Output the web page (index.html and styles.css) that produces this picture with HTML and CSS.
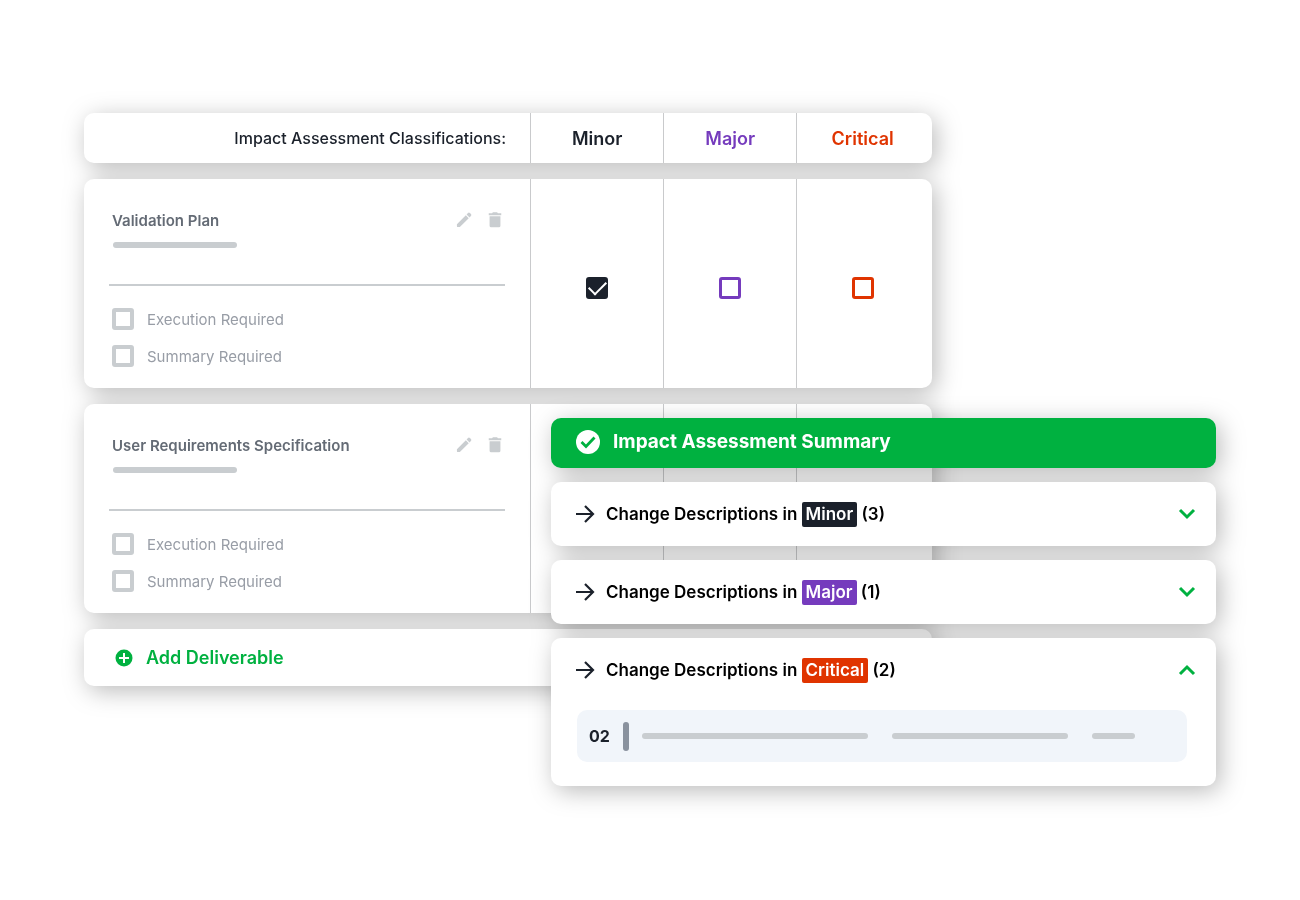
FILE: index.html
```
<!doctype html>
<html lang="en">
  <head>
    <meta charset="UTF-8" />
    <meta name="viewport" content="width=device-width, initial-scale=1.0" />
    <title>Impact Assessment</title>
    <link rel="stylesheet" href="styles.css">
  </head>
  <body>
    <!-- Shared icons -->
    <svg class="sprite" aria-hidden="true">
      <symbol id="pencil" viewBox="0 0 24 24">
        <path d="M3.5 17 14.2 6.3l3.5 3.5L7 20.5H4.6a1.1 1.1 0 0 1-1.1-1.1zM20.3 7.2l-1.7 1.7-3.5-3.5 1.7-1.7a1.6 1.6 0 0 1 2.3 0l1.2 1.2a1.6 1.6 0 0 1 0 2.3z" />
      </symbol>
      <symbol id="trash" viewBox="0 0 24 24">
        <path d="M5.5 7.5h13V19a1.8 1.8 0 0 1-1.8 1.8H7.3A1.8 1.8 0 0 1 5.5 19zM4.500 4h4l1-1.200h5l1 1.200h4v2.200h-15z" />
      </symbol>
      <symbol id="arrow" viewBox="0 0 20 20">
        <path d="M1 10h17M10 2l8 8-8 8" />
      </symbol>
      <symbol id="chevron" viewBox="0 0 18 12">
        <path d="M2 2l7 7 7-7" />
      </symbol>
    </svg>

    <main class="scene">
      <table class="board">
        <colgroup>
          <col class="col-name" />
          <col class="col-level" />
          <col class="col-level" />
          <col />
        </colgroup>
        <thead>
          <tr>
            <th class="board-title" scope="col">Impact Assessment Classifications:</th>
            <th class="level minor" scope="col">Minor</th>
            <th class="level major" scope="col">Major</th>
            <th class="level critical" scope="col">Critical</th>
          </tr>
        </thead>
        <tbody>
          <tr>
            <td class="deliverable">
              <div class="deliverable-head">
                <h2>Validation Plan</h2>
                <button class="icon-btn" aria-label="Edit"><svg><use href="#pencil" /></svg></button>
                <button class="icon-btn" aria-label="Delete"><svg><use href="#trash" /></svg></button>
              </div>
              <div class="name-line"></div>
              <hr />
              <label class="option"><input type="checkbox" class="check" /> Execution Required</label>
              <label class="option"><input type="checkbox" class="check" /> Summary Required</label>
            </td>
            <td class="level minor"><input type="checkbox" class="check" aria-label="Minor" checked /></td>
            <td class="level major"><input type="checkbox" class="check" aria-label="Major" /></td>
            <td class="level critical"><input type="checkbox" class="check" aria-label="Critical" /></td>
          </tr>
          <tr>
            <td class="deliverable">
              <div class="deliverable-head">
                <h2>User Requirements Specification</h2>
                <button class="icon-btn" aria-label="Edit"><svg><use href="#pencil" /></svg></button>
                <button class="icon-btn" aria-label="Delete"><svg><use href="#trash" /></svg></button>
              </div>
              <div class="name-line"></div>
              <hr />
              <label class="option"><input type="checkbox" class="check" /> Execution Required</label>
              <label class="option"><input type="checkbox" class="check" /> Summary Required</label>
            </td>
            <td class="level"></td>
            <td class="level"></td>
            <td class="level"></td>
          </tr>
        </tbody>
        <tfoot>
          <tr>
            <td class="board-footer" colspan="4">
              <button class="add-btn">
                <svg viewBox="0 0 18 18">
                  <circle cx="9" cy="9" r="8.5" />
                  <path d="M9 4v10M4 9h10" />
                </svg>
                Add Deliverable
              </button>
            </td>
          </tr>
        </tfoot>
      </table>

      <section class="summary">
        <h1 class="summary-title">
          <svg viewBox="0 0 24 24">
            <circle cx="12" cy="12" r="12" />
            <path d="M5.5 12l4.5 4.500 8.500-9" />
          </svg>
          Impact Assessment Summary
        </h1>

        <div class="panel">
          <button class="panel-head" aria-expanded="false">
            <svg class="arrow"><use href="#arrow" /></svg>
            <span class="panel-text">Change Descriptions in <span class="tag tag-minor">Minor</span> (3)</span>
            <svg class="chevron"><use href="#chevron" /></svg>
          </button>
        </div>

        <div class="panel">
          <button class="panel-head" aria-expanded="false">
            <svg class="arrow"><use href="#arrow" /></svg>
            <span class="panel-text">Change Descriptions in <span class="tag tag-major">Major</span> (1)</span>
            <svg class="chevron"><use href="#chevron" /></svg>
          </button>
        </div>

        <div class="panel">
          <button class="panel-head" aria-expanded="true">
            <svg class="arrow"><use href="#arrow" /></svg>
            <span class="panel-text">Change Descriptions in <span class="tag tag-critical">Critical</span> (2)</span>
            <svg class="chevron"><use href="#chevron" /></svg>
          </button>
          <div class="change">
            <span class="change-number">02</span>
            <span class="change-bar"></span>
            <div class="change-lines">
              <span></span>
              <span></span>
              <span></span>
            </div>
          </div>
        </div>
      </section>
    </main>
  </body>
</html>
```
FILE: styles.css
```
:root {
  --green: #00b140;
  --ink: #1b212b;
  --purple: #753bbd;
  --red: #e03400;
  --grey: #c9cdd0;
  --divider: #c9cacc;
  --title: #646b75;
  --label: #989da6;
  --radius: 10px;
}

* {
  box-sizing: border-box;
}

body {
  margin: 0;
  background: #fff;
  color: var(--ink);
  font-family: Inter, 'Liberation Sans', sans-serif;
  font-size: 15px;
}

h1,
h2 {
  margin: 0;
}

button {
  padding: 0;
  border: none;
  background: none;
  color: inherit;
  font: inherit;
  cursor: pointer;
}

.sprite {
  display: none;
}

/* The board and the summary share the middle column */
.scene {
  display: grid;
  grid-template-columns: 467fr 381fr 284fr;
  align-items: start;
  min-height: 100vh;
  padding: 97px 84px 48px;
}

.board,
.summary {
  grid-row: 1;
  filter: drop-shadow(4px 5px 12px rgba(0, 0, 0, 0.27));
}

/* Board */
.board {
  grid-column: 1 / 3;
  width: 100%;
  table-layout: fixed;
  border-spacing: 0 16px;
}

.col-name {
  width: 52.6%;
}

.col-level {
  width: 15.7%;
}

.board th,
.board td {
  padding: 0;
  background: #fff;
}

.board tr > :first-child {
  border-radius: var(--radius) 0 0 var(--radius);
}

.board tr > :last-child {
  border-radius: 0 var(--radius) var(--radius) 0;
}

.board .board-title {
  height: 50px;
  padding-right: 24px;
  font-size: 16px;
  font-weight: 500;
  text-align: right;
}

.board .level {
  border-left: 1px solid var(--divider);
  text-align: center;
  vertical-align: middle;
  font-size: 18px;
  font-weight: 600;
}

.board td.level {
  padding-top: 8px;
}

.level.minor {
  color: var(--ink);
}

.level.major {
  color: var(--purple);
}

.board .level.critical {
  padding-right: 4px;
  color: var(--red);
}

.board .deliverable {
  padding: 29px 25px 21px;
}

.deliverable-head {
  display: flex;
  align-items: center;
  height: 24px;
  padding-left: 3px;
}

.deliverable-head h2 {
  flex: 1;
  color: var(--title);
  font-size: 15px;
  font-weight: 600;
}

.icon-btn {
  display: flex;
  margin-left: 11px;
  color: var(--grey);
}

.icon-btn svg {
  width: 20px;
  height: 20px;
  fill: currentColor;
}

.name-line {
  width: 124px;
  height: 6px;
  margin: 10px 0 36px 4px;
  border-radius: 3px;
  background: var(--grey);
}

.deliverable hr {
  height: 2px;
  margin: 0 0 22px;
  border: none;
  background: var(--grey);
}

.option {
  display: flex;
  align-items: center;
  gap: 13px;
  height: 22px;
  padding-left: 3px;
  color: var(--label);
}

.option + .option {
  margin-top: 15px;
}

.check {
  appearance: none;
  display: inline-grid;
  place-items: center;
  width: 22px;
  height: 22px;
  margin: 0;
  border: 3px solid currentColor;
  border-radius: 3px;
  color: inherit;
  vertical-align: middle;
}

.option .check {
  border-width: 4px;
  border-color: var(--grey);
}

.check:checked {
  background: currentColor;
}

.check:checked::before {
  content: '';
  width: 15px;
  height: 8px;
  margin-bottom: 5px;
  border: solid #fff;
  border-width: 0 0 2px 2px;
  transform: rotate(-45deg);
}

.board .board-footer {
  height: 57px;
  padding-left: 31px;
}

.board tfoot tr > .board-footer {
  border-radius: var(--radius);
}

.add-btn {
  display: flex;
  align-items: center;
  gap: 13px;
  color: var(--green);
  font-size: 18px;
  font-weight: 600;
}

.add-btn svg {
  width: 18px;
  height: 18px;
  fill: var(--green);
  stroke: #fff;
  stroke-width: 2;
}

.add-btn circle {
  stroke: none;
}

/* Summary */
.summary {
  grid-column: 2 / 4;
  display: grid;
  gap: 14px;
  margin-top: 321px;
}

.summary-title {
  display: flex;
  align-items: center;
  gap: 13px;
  height: 50px;
  padding: 0 25px 3px;
  border-radius: var(--radius);
  background: var(--green);
  color: #fff;
  font-size: 19px;
  font-weight: 700;
}

.summary-title svg {
  width: 24px;
  height: 24px;
  fill: #fff;
}

.summary-title path {
  fill: none;
  stroke: var(--green);
  stroke-width: 2.8;
}

.panel {
  border-radius: var(--radius);
  background: #fff;
}

.panel-head {
  display: flex;
  align-items: center;
  width: 100%;
  height: 64px;
  padding: 0 20px 0 24px;
  color: #000;
  font-size: 17px;
  font-weight: 600;
}

.panel-text {
  flex: 1;
  margin-left: 11px;
  text-align: left;
}

.tag {
  display: inline-block;
  padding: 0 4px;
  border-radius: 2px;
  color: #fff;
  line-height: 25px;
}

.tag-minor {
  background: var(--ink);
}

.tag-major {
  background: var(--purple);
}

.tag-critical {
  background: var(--red);
}

.arrow {
  width: 20px;
  height: 20px;
  fill: none;
  stroke: var(--ink);
  stroke-width: 2.2;
}

.chevron {
  width: 18px;
  height: 12px;
  fill: none;
  stroke: var(--green);
  stroke-width: 3;
}

.panel-head[aria-expanded='true'] .chevron {
  transform: rotate(180deg);
}

.change {
  display: flex;
  align-items: center;
  height: 52px;
  margin: 8px 29px 24px 26px;
  padding: 0 12px;
  border-radius: var(--radius);
  background: #f1f5fa;
}

.change-number {
  width: 34px;
  font-size: 16px;
  font-weight: 700;
}

.change-bar {
  width: 6px;
  height: 29px;
  border-radius: 3px;
  background: #8a929e;
}

.change-lines {
  flex: 1;
  display: grid;
  grid-template-columns: 226fr 176fr 43fr;
  gap: 24px;
  padding: 0 40px 0 13px;
}

.change-lines span {
  height: 6px;
  border-radius: 3px;
  background: var(--grey);
}
```
